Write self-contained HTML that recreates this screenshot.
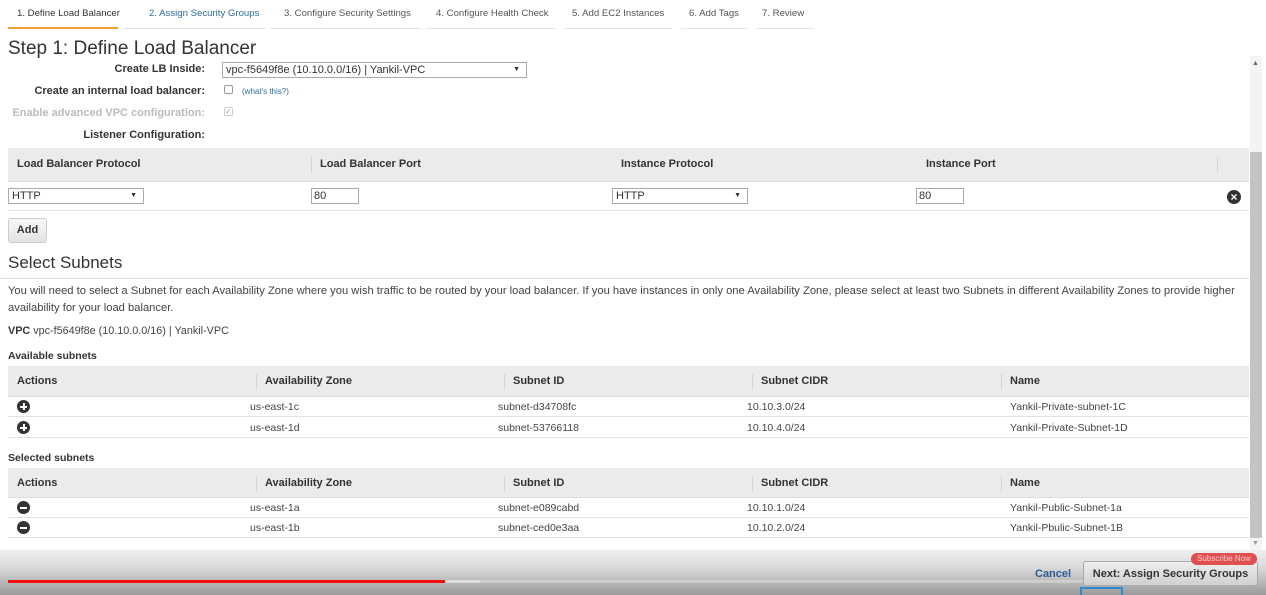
<!DOCTYPE html>
<html><head><meta charset="utf-8"><style>
*{margin:0;padding:0;box-sizing:border-box}
body{width:1266px;height:595px;overflow:hidden;background:#fff;font-family:"Liberation Sans",Arial,sans-serif;color:#333;position:relative}
.a{position:absolute;white-space:nowrap}
.tab{position:absolute;top:8px;font-size:9.6px;color:#555;height:21px;border-bottom:1px solid #e4e4e4;white-space:nowrap}
.lbl{position:absolute;font-size:11px;font-weight:bold;color:#333;text-align:right;right:1061px;white-space:nowrap}
.sel{position:absolute;border:1px solid #aaa;background:#fff;font-size:11px;padding-left:3px;line-height:14px;height:16px}
.sel:after{content:"▼";position:absolute;right:6px;top:0;font-size:7px}
.hdr{position:absolute;left:8px;width:1241px;background:#ebebeb;border-bottom:1px solid #ddd}
.hdr span{position:absolute;font-size:11px;font-weight:bold;color:#333}
.row{position:absolute;left:8px;width:1241px;border-bottom:1px solid #e2e2e2;height:20px}
.row span{position:absolute;font-size:10.5px;color:#444;top:4px}
.ic{position:absolute;left:9px;top:3px;width:13px;height:13px;border-radius:50%;background:#333}
.ic:before{content:"";position:absolute;left:3px;top:5.5px;width:7px;height:2px;background:#fff}
.plus:after{content:"";position:absolute;left:5.5px;top:3px;width:2px;height:7px;background:#fff}
.sep{position:absolute;top:8px;width:1px;height:16px;background:#d5d5d5}
</style></head><body>
<div class="tab" style="left:8px;width:110px;color:#333;border-bottom:2px solid #f0a030"><span style="margin-left:9px">1. Define Load Balancer</span></div>
<div class="tab" style="left:123px;width:143px;color:#2a6ea6"><span style="margin-left:26px">2. Assign Security Groups</span></div>
<div class="tab" style="left:271px;width:150px"><span style="margin-left:13px">3. Configure Security Settings</span></div>
<div class="tab" style="left:426px;width:130px"><span style="margin-left:10px">4. Configure Health Check</span></div>
<div class="tab" style="left:564px;width:108px"><span style="margin-left:8px">5. Add EC2 Instances</span></div>
<div class="tab" style="left:681px;width:66px"><span style="margin-left:8px">6. Add Tags</span></div>
<div class="tab" style="left:756px;width:58px"><span style="margin-left:6px">7. Review</span></div>

<div class="a" style="left:8px;top:38px;font-size:19px;color:#333">Step 1: Define Load Balancer</div>
<div class="lbl" style="top:63px">Create LB Inside:</div>
<div class="sel" style="left:222px;top:62px;width:305px">vpc-f5649f8e (10.10.0.0/16) | Yankil-VPC</div>
<div class="lbl" style="top:85px">Create an internal load balancer:</div>
<div class="a" style="left:224px;top:85px;width:9px;height:9px;border:1px solid #999;border-radius:2px"></div>
<div class="a" style="left:242px;top:87px;font-size:8px;color:#2a6ea6">(what's this?)</div>
<div class="lbl" style="top:107px;color:#bbb">Enable advanced VPC configuration:</div>
<div class="a" style="left:224px;top:107px;width:9px;height:9px;border:1px solid #ccc;border-radius:2px;font-size:8px;line-height:8px;color:#999">✓</div>
<div class="lbl" style="top:129px">Listener Configuration:</div>

<div class="hdr" style="top:148px;height:34px"><span style="left:9px;top:10px">Load Balancer Protocol</span><div class="sep" style="left:303px;top:9px"></div><span style="left:312px;top:10px">Load Balancer Port</span><span style="left:613px;top:10px">Instance Protocol</span><span style="left:918px;top:10px">Instance Port</span><div class="sep" style="left:1209px;top:9px"></div></div>
<div class="row" style="top:182px;height:29px"></div>
<div class="sel" style="left:8px;top:188px;width:136px">HTTP</div>
<div class="a" style="left:311px;top:188px;width:48px;height:16px;border:1px solid #aaa;font-size:11px;padding-left:2px;line-height:14px">80</div>
<div class="sel" style="left:612px;top:188px;width:136px">HTTP</div>
<div class="a" style="left:916px;top:188px;width:48px;height:16px;border:1px solid #aaa;font-size:11px;padding-left:2px;line-height:14px">80</div>
<div class="a" style="left:1227px;top:190px;width:14px;height:14px;border-radius:50%;background:#333;color:#fff;font-size:12px;line-height:14px;text-align:center;font-weight:bold">×</div>
<div class="a" style="left:8px;top:218px;width:39px;height:25px;border:1px solid #ccc;border-radius:3px;background:linear-gradient(#f8f8f8,#e2e2e2);font-size:11px;font-weight:bold;text-align:center;line-height:23px">Add</div>

<div class="a" style="left:8px;top:253px;font-size:17px;color:#333">Select Subnets</div>
<div class="a" style="left:0;top:278px;width:1249px;height:1px;background:#ddd"></div>
<div class="a" style="left:8px;top:283px;font-size:11.2px;line-height:17px;color:#444;white-space:normal;width:1240px">You will need to select a Subnet for each Availability Zone where you wish traffic to be routed by your load balancer. If you have instances in only one Availability Zone, please select at least two Subnets in different Availability Zones to provide higher availability for your load balancer.</div>
<div class="a" style="left:8px;top:325px;font-size:10.8px;color:#444"><b style="color:#333">VPC</b> vpc-f5649f8e (10.10.0.0/16) | Yankil-VPC</div>
<div class="a" style="left:8px;top:350px;font-size:10.5px;font-weight:bold;color:#333">Available subnets</div>
<div class="hdr" style="top:366px;height:31px"><span style="left:9px;top:9px">Actions</span><div class="sep" style="left:248px"></div><span style="left:257px;top:9px">Availability Zone</span><div class="sep" style="left:496px"></div><span style="left:505px;top:9px">Subnet ID</span><div class="sep" style="left:744px"></div><span style="left:753px;top:9px">Subnet CIDR</span><div class="sep" style="left:993px"></div><span style="left:1002px;top:9px">Name</span></div>
<div class="row" style="top:397px"><div class="ic plus"></div><span style="left:242px">us-east-1c</span><span style="left:490px">subnet-d34708fc</span><span style="left:739px">10.10.3.0/24</span><span style="left:1002px">Yankil-Private-subnet-1C</span></div>
<div class="row" style="top:418px"><div class="ic plus"></div><span style="left:242px">us-east-1d</span><span style="left:490px">subnet-53766118</span><span style="left:739px">10.10.4.0/24</span><span style="left:1002px">Yankil-Private-Subnet-1D</span></div>
<div class="a" style="left:8px;top:452px;font-size:10.5px;font-weight:bold;color:#333">Selected subnets</div>
<div class="hdr" style="top:468px;height:30px"><span style="left:9px;top:9px">Actions</span><div class="sep" style="left:248px"></div><span style="left:257px;top:9px">Availability Zone</span><div class="sep" style="left:496px"></div><span style="left:505px;top:9px">Subnet ID</span><div class="sep" style="left:744px"></div><span style="left:753px;top:9px">Subnet CIDR</span><div class="sep" style="left:993px"></div><span style="left:1002px;top:9px">Name</span></div>
<div class="row" style="top:498px"><div class="ic"></div><span style="left:242px">us-east-1a</span><span style="left:490px">subnet-e089cabd</span><span style="left:739px">10.10.1.0/24</span><span style="left:1002px">Yankil-Public-Subnet-1a</span></div>
<div class="row" style="top:518px"><div class="ic"></div><span style="left:242px">us-east-1b</span><span style="left:490px">subnet-ced0e3aa</span><span style="left:739px">10.10.2.0/24</span><span style="left:1002px">Yankil-Pbulic-Subnet-1B</span></div>

<div class="a" style="left:1250px;top:56px;width:12px;height:494px;background:#f4f4f4"></div>
<div class="a" style="left:1252px;top:60px;font-size:7px;color:#666">▲</div>
<div class="a" style="left:1250px;top:152px;width:12px;height:386px;background:#c4c4c4"></div>
<div class="a" style="left:1252px;top:540px;font-size:7px;color:#999">▼</div>

<div class="a" style="left:0;top:550px;width:1266px;height:45px;background:linear-gradient(#f0f0f0 0%,#d8d8d8 40%,#9a9a9a 100%)"></div>
<div class="a" style="left:8px;top:580px;width:1250px;height:3px;background:rgba(255,255,255,0.3)"></div>
<div class="a" style="left:445px;top:580px;width:35px;height:3px;background:#ddd"></div>
<div class="a" style="left:8px;top:580px;width:437px;height:3px;background:#f01010"></div>
<div class="a" style="left:1035px;top:568px;font-size:11px;font-weight:bold;color:#2a5e96">Cancel</div>
<div class="a" style="left:1083px;top:561px;width:175px;height:25px;border:1px solid #aaa;border-radius:3px;background:linear-gradient(#eee,#d0d0d0);font-size:11px;font-weight:bold;color:#333;text-align:center;line-height:24px">Next: Assign Security Groups</div>
<div class="a" style="left:1191px;top:553px;width:66px;height:12px;border-radius:6px;background:#e05050;color:#fcc;font-size:8px;text-align:center;line-height:12px">Subscribe Now</div>
<div class="a" style="left:1080px;top:587px;width:43px;height:8px;border:2px solid #2a8ad0;border-bottom:none"></div>
</body></html>
